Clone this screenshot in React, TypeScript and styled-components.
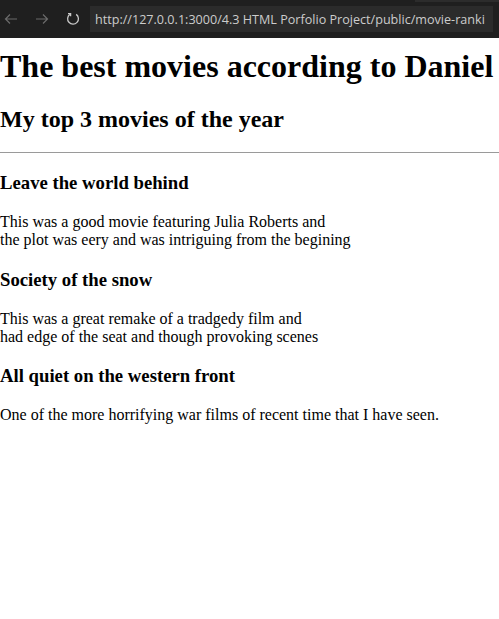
import React from 'react'
import styled, { createGlobalStyle } from 'styled-components'

const GlobalStyle = createGlobalStyle`
  html, body {
    margin: 0;
    padding: 0;
    background: #ffffff;
  }
  body {
    font-family: "Liberation Serif", "Times New Roman", serif;
    color: #000;
  }
`

const Toolbar = styled.div`
  height: 38px;
  background-color: #1f1f1f;
  background-image: linear-gradient(to right, transparent 415px, #2c2c2c 415px);
  background-size: 100% 2px;
  background-repeat: no-repeat;
  display: flex;
  align-items: center;
  gap: 9px;
  box-sizing: border-box;
`

const NavButton = styled.div<{ $dim?: boolean }>`
  width: 22px;
  height: 26px;
  flex-shrink: 0;
  display: flex;
  align-items: center;
  justify-content: center;
  color: ${(p) => (p.$dim ? '#6b6b6b' : '#c8c8c8')};
`

const UrlBox = styled.div`
  margin-left: -3px;
  flex: 1;
  margin-right: 6px;
  height: 26px;
  background-color: #2b2b2b;
  display: flex;
  align-items: center;
  padding-left: 5px;
  overflow: hidden;
  white-space: nowrap;
  font-family: "Open Sans", "Noto Sans", sans-serif;
  font-size: 12.6px;
  color: #cccccc;
`

const Page = styled.div`
  padding: 0;
`

const Title = styled.h1`
  font-size: 32px;
  margin: 10px 0 21px;
`

const Subtitle = styled.h2`
  font-size: 24px;
  margin: 20px 0 19px;
`

const Rule = styled.hr`
  margin: 0 0 1px;
  border: none;
  border-top: 1px solid #9a9a9a;
  height: 0;
`

const MovieTitle = styled.h3`
  font-size: 18.72px;
  margin: 19.2px 0;
`

const Blurb = styled.p`
  font-size: 16px;
  margin: 16px 0;
`

const movies = [
  {
    title: 'Leave the world behind',
    lines: [
      'This was a good movie featuring Julia Roberts and',
      'the plot was eery and was intriguing from the begining',
    ],
  },
  {
    title: 'Society of the snow',
    lines: ['This was a great remake of a tradgedy film and', 'had edge of the seat and though provoking scenes'],
  },
  {
    title: 'All quiet on the western front',
    lines: ['One of the more horrifying war films of recent time that I have seen.'],
  },
]

const App = () => {
  return (
    <>
      <GlobalStyle />
      <Toolbar>
        <NavButton $dim>
          <svg width="16" height="16" viewBox="0 0 16 16" fill="none" stroke="currentColor" strokeWidth="1.2">
            <path d="M14 8H2.5M7 3.5L2.5 8L7 12.5" />
          </svg>
        </NavButton>
        <NavButton $dim>
          <svg width="16" height="16" viewBox="0 0 16 16" fill="none" stroke="currentColor" strokeWidth="1.2">
            <path d="M2 8h11.5M9 3.5L13.5 8L9 12.5" />
          </svg>
        </NavButton>
        <NavButton>
          <svg width="16" height="16" viewBox="0 0 16 16" fill="none" stroke="currentColor" strokeWidth="1.3">
            <path d="M5 3.3A5.4 5.4 0 1 0 11.2 3.4" />
            <path d="M3 2.6h2.6v2.6" />
          </svg>
        </NavButton>
        <UrlBox>http://127.0.0.1:3000/4.3 HTML Porfolio Project/public/movie-ranki</UrlBox>
      </Toolbar>
      <Page>
        <Title>The best movies according to Daniel</Title>
        <Subtitle>My top 3 movies of the year</Subtitle>
        <Rule />
        {movies.map((m, i) => (
          <div key={`movie-${i}`}>
            <MovieTitle>{m.title}</MovieTitle>
            <Blurb>
              {m.lines.map((l, j) => (
                <React.Fragment key={j}>
                  {j > 0 && <br />}
                  {l}
                </React.Fragment>
              ))}
            </Blurb>
          </div>
        ))}
      </Page>
    </>
  )
}

export default App
